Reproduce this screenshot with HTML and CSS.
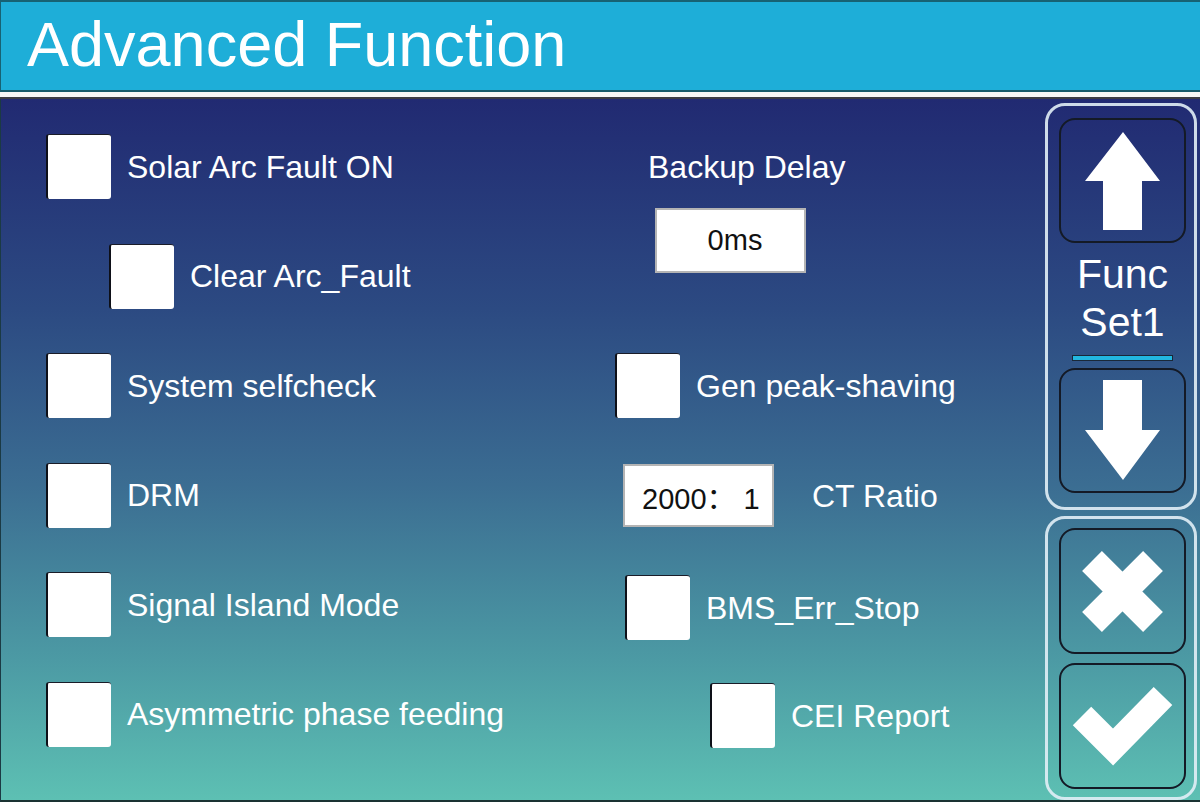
FILE: index.html
```html
<!DOCTYPE html>
<html lang="en">
<head>
<meta charset="utf-8">
<title>Advanced Function</title>
<link rel="stylesheet" href="styles.css">
</head>
<body>
<div class="screen">
  <header class="titlebar"><h1 class="title">Advanced Function</h1></header>
  <div class="sep"></div>
  <main class="content">
    <section class="col-left">
      <div class="row"><span class="chk"></span><span class="lbl">Solar Arc Fault ON</span></div>
      <div class="row row-indent"><span class="chk"></span><span class="lbl">Clear Arc_Fault</span></div>
      <div class="row"><span class="chk"></span><span class="lbl">System selfcheck</span></div>
      <div class="row"><span class="chk"></span><span class="lbl">DRM</span></div>
      <div class="row"><span class="chk"></span><span class="lbl">Signal Island Mode</span></div>
      <div class="row"><span class="chk"></span><span class="lbl">Asymmetric phase feeding</span></div>
    </section>
    <section class="col-right">
      <div class="rrow r-backup"><span class="lbl">Backup Delay</span></div>
      <div class="field f-delay">0ms</div>
      <div class="rrow r-gen"><span class="chk"></span><span class="lbl">Gen peak-shaving</span></div>
      <div class="rrow r-ct"><div class="field f-ct">2000： 1</div><span class="lbl">CT Ratio</span></div>
      <div class="rrow r-bms"><span class="chk"></span><span class="lbl">BMS_Err_Stop</span></div>
      <div class="rrow r-cei"><span class="chk"></span><span class="lbl">CEI Report</span></div>
    </section>
    <aside class="side">
      <div class="panel panel-nav">
        <div class="btn btn-up">
          <svg class="ico" viewBox="0 0 123 121" width="123" height="121"><polygon points="62,12 99,61 81,61 81,110 42,110 42,61 24,61" fill="#fff"/></svg>
        </div>
        <div class="func">Func<br>Set1</div>
        <div class="bar"></div>
        <div class="btn btn-down">
          <svg class="ico" viewBox="0 0 123 121" width="123" height="121"><polygon points="42,10 81,10 81,60 99,60 62,110 24,60 42,60" fill="#fff"/></svg>
        </div>
      </div>
      <div class="panel panel-act">
        <div class="btn btn-x">
          <svg class="ico" viewBox="0 0 123 122" width="123" height="122"><path d="M31 31 L92 92 M92 31 L31 92" stroke="#fff" stroke-width="28" fill="none"/></svg>
        </div>
        <div class="btn btn-ok">
          <svg class="ico" viewBox="0 0 123 122" width="123" height="122"><polyline points="21,51 52,82 102,31" stroke="#fff" stroke-width="26" fill="none" stroke-linejoin="miter"/></svg>
        </div>
      </div>
    </aside>
  </main>
</div>
</body>
</html>
```

FILE: styles.css
```css
html, body {
  margin: 0;
  padding: 0;
}
body {
  width: 1200px;
  height: 802px;
  overflow: hidden;
  font-family: "Liberation Sans", Arial, sans-serif;
  background: #1a3a40;
}
.screen {
  width: 1200px;
  height: 802px;
  display: flex;
  flex-direction: column;
}
.titlebar {
  height: 88px;
  border-top: 2px solid #176273;
  border-left: 1px solid #176273;
  background: #1eaed8;
}
.title {
  margin: 0;
  padding-left: 26px;
  font-weight: normal;
  font-size: 63px;
  line-height: 84px;
  color: #fff;
}
.sep {
  height: 5px;
  border-top: 2px solid #165a6a;
  border-bottom: 2px solid #3c3c44;
  background: #f6f6f6;
}
.content {
  height: 701px;
  border-left: 1px solid #1b3a44;
  border-bottom: 2px solid #1a3232;
  background: linear-gradient(180deg, #212a72 0%, #2c4a82 30%, #3b6d92 55%, #4c9aa4 80%, #5dc0b3 100%);
  display: flex;
}
.col-left {
  width: 554px;
  padding-left: 45px;
  padding-top: 35px;
  display: flex;
  flex-direction: column;
  gap: 44.6px;
}
.row {
  height: 65px;
  display: flex;
  align-items: center;
}
.row-indent {
  padding-left: 63px;
}
.chk {
  width: 63px;
  height: 64px;
  flex: none;
  background: #fff;
  border-left: 2px solid #0e1018;
  border-top: 1px solid #1a1c28;
  border-radius: 3px;
}
.lbl {
  font-size: 32px;
  line-height: 1;
  color: #fff;
  white-space: nowrap;
  padding-left: 16px;
}
.col-right {
  width: 445px;
  display: flex;
  flex-direction: column;
}
.rrow {
  height: 65px;
  display: flex;
  align-items: center;
}
.r-backup {
  margin-top: 35px;
  padding-left: 48px;
}
.r-backup .lbl { padding-left: 0; }
.field {
  box-sizing: border-box;
  width: 151px;
  background: #fff;
  border: 2px solid #b4b4b4;
  font-family: "Liberation Sans", "Noto Sans CJK SC", sans-serif;
  font-size: 29px;
  color: #111;
  display: flex;
  align-items: center;
}
.f-delay {
  height: 65px;
  margin-top: 9px;
  margin-left: 55px;
  justify-content: center;
  padding-left: 9px;
}
.r-gen {
  margin-top: 80px;
  padding-left: 15px;
}
.r-ct {
  margin-top: 46px;
  height: 63px;
  padding-left: 23px;
}
.f-ct {
  height: 63px;
  padding-left: 17px;
}
.r-ct .lbl { padding-left: 38px; }
.r-bms {
  margin-top: 48px;
  padding-left: 25px;
}
.r-cei {
  margin-top: 43px;
  padding-left: 110px;
}
.side {
  width: 152px;
  padding-top: 4px;
  display: flex;
  flex-direction: column;
  gap: 6px;
}
.panel {
  border: 3px solid rgba(225, 238, 246, 0.9);
  border-radius: 20px;
  display: flex;
  flex-direction: column;
  align-items: center;
  padding: 0 8px 0 11px;
}
.panel-nav {
  height: 381px;
  padding-top: 12px;
  padding-bottom: 11px;
}
.panel-act {
  height: 261px;
  padding-top: 9px;
  padding-bottom: 8px;
  gap: 9px;
}
.btn {
  width: 123px;
  border: 2px solid #141a26;
  border-radius: 16px;
  display: flex;
}
.btn-up, .btn-down { height: 121px; }
.btn-x, .btn-ok { height: 122px; }
.ico { display: block; }
.func {
  margin-top: 7px;
  font-size: 41px;
  line-height: 48px;
  color: #fff;
  text-align: center;
}
.bar {
  margin-top: 9px;
  width: 99px;
  height: 4px;
  background: #22b8e0;
  border: 1px solid #1a2838;
}
.btn-down { margin-top: 7px; }
```
